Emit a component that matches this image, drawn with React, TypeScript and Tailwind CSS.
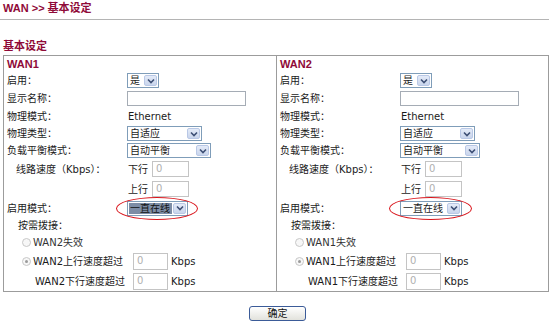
import { ReactNode } from 'react'

const red = 'text-[#8f0a38]'

function Chevron() {
  return (
    <svg width="8" height="6" viewBox="0 0 8 6">
      <path d="M1 1.5 L4 4.5 L7 1.5" fill="none" stroke="#3d4f75" strokeWidth="1.6" />
    </svg>
  )
}

function Select({ text, width, selected }: { text: string; width: number; selected?: boolean }) {
  return (
    <div
      className="flex h-[15px] border border-[#7f9db9] bg-white items-stretch whitespace-nowrap"
      style={{ width }}
    >
      <div className="flex-1 min-w-0 flex items-center pl-[1px] py-[1px] overflow-hidden">
        <span
          className={
            selected
              ? 'bg-[#7d8da6] text-[#111] pl-[1px] leading-[11px] w-full'
              : 'px-[1px] leading-[11px]'
          }
        >
          {text}
        </span>
      </div>
      <div className="w-[13px] shrink-0 m-px flex items-center justify-center rounded-[2px] bg-linear-to-b from-[#e4ebf8] to-[#c9d5ec] border border-[#b9c8e6]">
        <Chevron />
      </div>
    </div>
  )
}

function Field({ w, h = 16 }: { w: number; h?: number }) {
  return (
    <div
      className="border border-[#c4c4c4] bg-white text-[#b0b0b0] pl-[3px] leading-[13px]"
      style={{ width: w, height: h }}
    >
      0
    </div>
  )
}

function Row({ h, label, indent = 3, children }: { h: number; label?: ReactNode; indent?: number; children?: ReactNode }) {
  return (
    <div className="flex items-center whitespace-nowrap" style={{ height: h }}>
      <div className="w-[123px] shrink-0" style={{ paddingLeft: indent }}>
        {label}
      </div>
      {children}
    </div>
  )
}

function Radio({ checked }: { checked?: boolean }) {
  return (
    <span className="w-[9px] h-[9px] rounded-full border border-[#c8c8c8] bg-[#f7f7f7] flex items-center justify-center">
      {checked && <span className="w-[3px] h-[3px] rounded-full bg-[#9a9a9a]" />}
    </span>
  )
}

function Ring({ children }: { children: ReactNode }) {
  return (
    <div className="relative">
      {children}
      <span className="absolute -left-[11px] -right-[10px] -top-[4px] -bottom-[4px] rounded-[50%] border-[1.5px] border-[#d9141b]" />
    </div>
  )
}

function WanColumn({ name, other, wideSel, modeSel, selected }: { name: string; other: string; wideSel: number; modeSel: number; selected?: boolean }) {
  return (
    <div className="flex flex-col">
      <div className={`h-[16px] pl-[3px] font-['Liberation_Sans','Noto_Sans_CJK_SC',sans-serif] font-bold text-[11px] leading-[16px] ${red}`}>
        {name}
      </div>
      <Row h={17} label="启用：">
        <Select text="是" width={32} />
      </Row>
      <Row h={19} label="显示名称：">
        <div className="w-[119px] h-[15px] border border-[#a5acb5] bg-white" />
      </Row>
      <Row h={17} label="物理模式：">
        <span className="pl-px">Ethernet</span>
      </Row>
      <Row h={17} label="物理类型：">
        <Select text="自适应" width={75} />
      </Row>
      <Row h={17} label="负载平衡模式：">
        <Select text="自动平衡" width={wideSel} />
      </Row>
      <Row h={20} indent={12} label="线路速度（Kbps）：">
        <span className="pl-px w-[25px]">下行</span>
        <Field w={37} />
      </Row>
      <Row h={20}>
        <span className="pl-px w-[25px]">上行</span>
        <Field w={37} />
      </Row>
      <Row h={18} label="启用模式：">
        <Ring>
          <Select text="一直在线" width={modeSel} selected={selected} />
        </Ring>
      </Row>
      <Row h={17} indent={14} label="按需拨接：" />
      <div className="h-[17px] flex items-center pl-[18px] gap-[2px] text-[#333]">
        <Radio />
        <span>{other}失效</span>
      </div>
      <div className="h-[20px] flex items-center whitespace-nowrap">
        <div className="w-[129px] flex items-center pl-[18px] gap-[2px]">
          <Radio checked />
          <span>{other}上行速度超过</span>
        </div>
        <Field w={35} h={17} />
        <span className="ml-[3px]">Kbps</span>
      </div>
      <div className="h-[20px] flex items-center whitespace-nowrap">
        <div className="w-[129px] pl-[31px]">{other}下行速度超过</div>
        <Field w={35} h={17} />
        <span className="ml-[3px]">Kbps</span>
      </div>
    </div>
  )
}

export default function App() {
  return (
    <div className="w-[554px] h-[327px] bg-white font-['DejaVu_Sans','Noto_Sans_CJK_SC',sans-serif] text-[10px] text-[#1a1a1a] overflow-hidden">
      <div className={`h-[19px] pl-[3px] pt-[1px] font-['Liberation_Sans','Noto_Sans_CJK_SC',sans-serif] font-bold text-[11px] leading-[15px] ${red}`}>
        WAN &gt;&gt; 基本设定
      </div>
      <div className="h-px w-[549px] bg-[#b4b4b4]" />
      <div className={`h-[35px] pl-[3px] pt-[19px] font-['Liberation_Sans','Noto_Sans_CJK_SC',sans-serif] font-bold text-[11px] leading-[14px] ${red}`}>
        基本设定
      </div>
      <div className="ml-[3px] w-[546px] border border-[#9c9c9c] grid grid-cols-[272px_1fr]">
        <WanColumn name="WAN1" other="WAN2" wideSel={84} modeSel={61} selected />
        <div className="border-l border-[#9c9c9c]">
          <WanColumn name="WAN2" other="WAN1" wideSel={80} modeSel={62} />
        </div>
      </div>
      <div className="flex justify-center mt-[14px] pl-[1px]">
        <button className="w-[57px] h-[15px] rounded-[3px] border border-[#3b5b98] bg-linear-to-b from-white to-[#e2e2dc] text-[10px] leading-[13px] text-[#111]">
          确定
        </button>
      </div>
    </div>
  )
}
